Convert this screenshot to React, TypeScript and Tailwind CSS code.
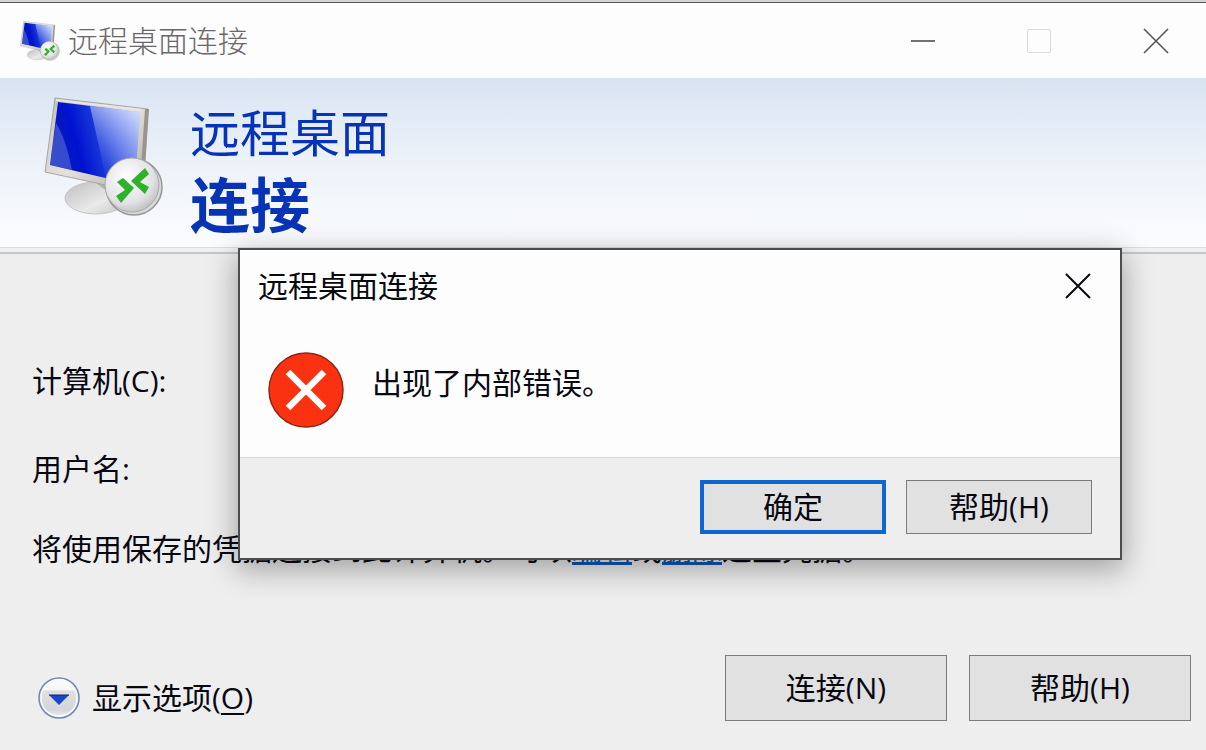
import { useState } from 'react';
import type { ReactNode } from 'react';

function RemoteDesktopIcon({ id, className }: { id: string; className: string }) {
  return (
    <svg viewBox="0 0 120 120" className={className} aria-hidden="true">
      <defs>
        <linearGradient id={`${id}-screen`} x1="0" y1="0.6" x2="1" y2="0.35">
          <stop offset="0" stopColor="#0a1fb0" />
          <stop offset="0.3" stopColor="#0012d0" />
          <stop offset="0.55" stopColor="#1a38d8" />
          <stop offset="1" stopColor="#a9bbf8" />
        </linearGradient>
        <linearGradient id={`${id}-glare`} x1="0.6" y1="0" x2="0.4" y2="1">
          <stop offset="0" stopColor="#e6edff" stopOpacity="0.6" />
          <stop offset="1" stopColor="#2244e0" stopOpacity="0.2" />
        </linearGradient>
        <linearGradient id={`${id}-frame`} x1="0" y1="0" x2="1" y2="1">
          <stop offset="0" stopColor="#c2c0bd" />
          <stop offset="0.5" stopColor="#e4e1dd" />
          <stop offset="1" stopColor="#aaa6a0" />
        </linearGradient>
        <linearGradient id={`${id}-stand`} x1="0" y1="0" x2="1" y2="1">
          <stop offset="0" stopColor="#bfbfbf" />
          <stop offset="0.6" stopColor="#e9e9e9" />
          <stop offset="1" stopColor="#c6c6c6" />
        </linearGradient>
        <radialGradient id={`${id}-badge`} cx="0.4" cy="0.35" r="0.7">
          <stop offset="0" stopColor="#ffffff" />
          <stop offset="0.7" stopColor="#e2e1e5" />
          <stop offset="1" stopColor="#bdbcbe" />
        </radialGradient>
      </defs>
      <ellipse cx="52" cy="101" rx="31" ry="16" fill={`url(#${id}-stand)`} stroke="#c4c4c4" />
      <path d="M38 80 L70 84 L68 98 Q60 92 52 86 Z" fill="#b3b1ae" />
      <path d="M11 1 L104 12 L99 96 L1 75 Z" fill={`url(#${id}-frame)`} stroke="#a9a6a2" />
      <path d="M101 12 L105 12 L101 70 L97 70 Z" fill="#99958d" />
      <path d="M14 5 L96 15 L91 88 L6 68 Z" fill={`url(#${id}-screen)`} />
      <path d="M46 9 L96 15 L91 88 L62 81 Z" fill={`url(#${id}-glare)`} />
      <path d="M12 26 Q22 42 28 73 L6 68 Z" fill="#8095e9" opacity="0.4" />
      <path d="M12 3 L97 13" stroke="#e9e7e4" strokeWidth="2" />
      <circle cx="90" cy="90" r="28" fill="#d8d8d8" stroke="#969696" strokeWidth="1.500" />
      <circle cx="88" cy="88" r="27" fill={`url(#${id}-badge)`} stroke="#aaaaaa" />
      <path d="M73 85 L79 81 L90 91 L77 106 L72 99 L81 93 Z" fill="#2fb129" />
      <path d="M101 71 L105 77 L96 85 L105 90 L101 97 L87 84 Z" fill="#2fb129" />
    </svg>
  );
}

function CloseGlyph({ strokeWidth }: { strokeWidth: number }) {
  return (
    <svg viewBox="0 0 26 26" className="size-[26px]" aria-hidden="true">
      <path d="M1 1 L25 25 M25 1 L1 25" stroke="currentColor" strokeWidth={strokeWidth} />
    </svg>
  );
}

function WinButton({
  children,
  className,
  onClick,
}: {
  children: ReactNode;
  className: string;
  onClick?: () => void;
}) {
  return (
    <button
      type="button"
      onClick={onClick}
      className={`flex items-center justify-center bg-[#e1e1e2] leading-10 ${className}`}
    >
      {children}
    </button>
  );
}

function ErrorDialog({ onClose }: { onClose: () => void }) {
  return (
    <div
      role="dialog"
      aria-labelledby="error-title"
      className="absolute left-[238px] top-[248px] w-[884px] border-2 border-[#4b4b50] bg-[#fdfdfe] shadow-[0_8px_28px_2px_rgba(0,0,0,0.32)]"
    >
      <div className="flex items-center justify-between pl-[18px] pr-[29px] pt-4">
        <h2 id="error-title" className="leading-10">
          远程桌面连接
        </h2>
        <button type="button" aria-label="关闭" onClick={onClose}>
          <CloseGlyph strokeWidth={2} />
        </button>
      </div>
      <div className="flex h-[151px] gap-7 pl-7 pt-[46px]">
        <svg viewBox="0 0 76 76" className="size-[76px]" aria-hidden="true">
          <circle cx="38" cy="38" r="37" fill="#fb3211" stroke="#8f2418" strokeWidth="1.500" />
          <path d="M20 20 L56 56 M56 20 L20 56" stroke="#ffffff" strokeWidth="6.500" />
        </svg>
        <p className="pt-[11px] leading-10">出现了内部错误。</p>
      </div>
      <div className="flex justify-end gap-5 border-t border-[#d9d9d9] bg-[#eeeeef] pb-6 pr-7 pt-[22px]">
        <WinButton className="h-[54px] w-[186px] border-4 border-[#0f66d0]" onClick={onClose}>
          确定
        </WinButton>
        <WinButton className="h-[54px] w-[186px] border border-[#7b7b7b]">帮助(H)</WinButton>
      </div>
    </div>
  );
}

export default function App() {
  const [dialogOpen, setDialogOpen] = useState(true);

  return (
    <div className="relative flex min-h-screen flex-col overflow-hidden bg-[#eeeeef] font-['Open_Sans','Noto_Sans_CJK_SC',sans-serif] text-[30px] text-[#080810]">
      <div className="h-[3px] border-b border-[#5c5c5a] bg-[#d4d4d4]" />
      <header className="flex h-[75px] items-center justify-between bg-[#fdfdfe] pl-5 pr-[37px]">
        <div className="flex items-center gap-2">
          <RemoteDesktopIcon id="small" className="size-10" />
          <h1 className="font-light leading-10 text-[#6b6669]">远程桌面连接</h1>
        </div>
        <div className="flex items-center gap-[92px] text-[#505050]">
          <button type="button" aria-label="最小化" className="flex size-6 items-center">
            <span className="h-0.5 w-full bg-[#727272]" />
          </button>
          <button
            type="button"
            aria-label="最大化"
            disabled
            className="size-6 rounded-xs border border-[#dcdcdc]"
          />
          <button type="button" aria-label="关闭窗口">
            <CloseGlyph strokeWidth={1.5} />
          </button>
        </div>
      </header>

      <section className="flex h-[169px] gap-[26px] bg-linear-to-b from-[#d9e4f2] via-[#edf2f9] to-[#fbfcfe] pl-11 pt-[19px]">
        <RemoteDesktopIcon id="large" className="size-[120px]" />
        <div className="text-[#0634b4]">
          <p className="text-[50px] leading-[72px]">远程桌面</p>
          <p className="text-[60px] font-bold leading-[72px]">连接</p>
        </div>
      </section>
      <div className="h-[7px] border-b-2 border-t border-b-[#c6c6c8] border-t-[#dcdcdf] bg-[#f1f1f3]" />

      <main className="flex flex-1 flex-col pb-[29px] pl-8 pr-[15px] pt-[107px]">
        <div className="flex items-center gap-24">
          <label htmlFor="computer" className="leading-10">
            计算机(C):
          </label>
          <input id="computer" type="text" className="h-10 w-[600px] border border-[#7b7b7b] bg-white px-2" />
        </div>
        <p className="mt-12 leading-10">用户名:</p>
        <p className="mt-10 whitespace-nowrap leading-10">
          将使用保存的凭据连接到此计算机。可以
          <a href="#edit" className="text-[#0f59b5] underline">
            编辑
          </a>
          或
          <a href="#delete" className="text-[#0f59b5] underline">
            删除
          </a>
          这些凭据。
        </p>
        <div className="mt-auto flex items-center justify-between">
          <button type="button" className="flex items-center gap-3 pl-1.5 pt-5">
            <svg viewBox="0 0 42 42" className="size-[42px]" aria-hidden="true">
              <defs>
                <linearGradient id="expander" x1="0" y1="0" x2="0" y2="1">
                  <stop offset="0" stopColor="#ffffff" />
                  <stop offset="0.3" stopColor="#f6f6f6" />
                  <stop offset="0.32" stopColor="#dfdfdf" />
                  <stop offset="0.8" stopColor="#d3d6da" />
                  <stop offset="1" stopColor="#f0f4fb" />
                </linearGradient>
              </defs>
              <circle cx="21" cy="21" r="20" fill="url(#expander)" stroke="#7387b4" strokeWidth="1.500" />
              <circle cx="21" cy="21" r="18" fill="none" stroke="#f8faff" strokeWidth="1.500" />
              <path d="M11 18 L31 18 L21 28 Z" fill="#1746cf" />
              <path d="M11 18 L31 18" stroke="#0c2562" strokeWidth="1" />
            </svg>
            <span className="leading-10">
              显示选项(<u className="decoration-2 underline-offset-4">O</u>)
            </span>
          </button>
          <div className="flex gap-[22px]">
            <WinButton className="h-[66px] w-[222px] border border-[#7b7b7b]" onClick={() => setDialogOpen(true)}>
              连接(N)
            </WinButton>
            <WinButton className="h-[66px] w-[222px] border border-[#7b7b7b]">帮助(H)</WinButton>
          </div>
        </div>
      </main>

      {dialogOpen && <ErrorDialog onClose={() => setDialogOpen(false)} />}
    </div>
  );
}
